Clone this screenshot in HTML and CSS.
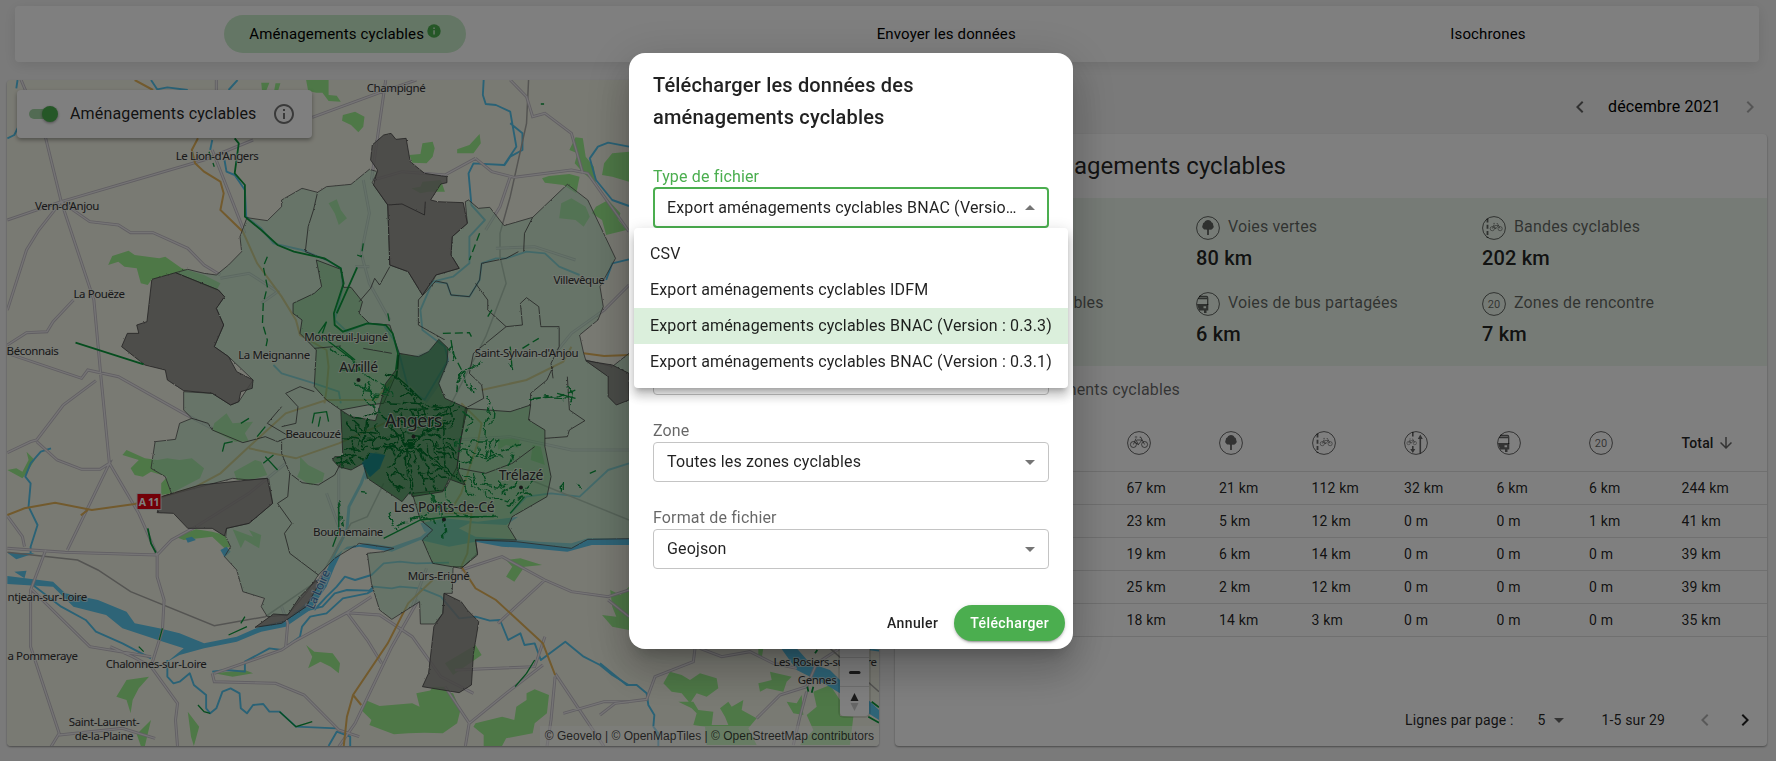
FILE: index.html
```html
<!DOCTYPE html>
<html lang="fr">
<head>
<meta charset="utf-8">
<title>Aménagements cyclables</title>
<link rel="stylesheet" href="styles.css">
</head>
<body>
<svg class="defs" width="0" height="0">
  <defs>
    <filter id="wiggle" x="-5%" y="-5%" width="110%" height="110%"><feTurbulence type="fractalNoise" baseFrequency=".09" numOctaves="2" seed="4"/><feDisplacementMap in="SourceGraphic" scale="11" xChannelSelector="R" yChannelSelector="G"/></filter>
    <filter id="jag" x="-2%" y="-2%" width="104%" height="104%"><feTurbulence type="fractalNoise" baseFrequency=".16" numOctaves="2" seed="9"/><feDisplacementMap in="SourceGraphic" scale="5" xChannelSelector="R" yChannelSelector="G"/></filter>
    <g id="bike" fill="none" stroke="currentColor" stroke-width=".9">
      <circle cx="6.4" cy="13.5" r="3"/><circle cx="17.6" cy="13.5" r="3"/>
      <path d="M6.4 13.5 9 7.5M9.8 9h5.2l-3.6 4.6L9 9M14 6.2h-1.4M13.8 6.2l3.8 7.3M7.8 6h2.4M11.4 13.6l-3-1.8"/>
    </g>
    <symbol id="i-track" viewBox="0 0 24 24"><circle class="ring" cx="12" cy="12" r="11.4"/><use href="#bike"/></symbol>
    <symbol id="i-tree" viewBox="0 0 24 24"><circle class="ring" cx="12" cy="12" r="11.4"/><path fill="currentColor" d="M12 4c2 0 3 1 3.4 2.2 1.5.5 2 1.6 1.7 2.8 1 1.100.8 2.800-.4 3.600-.7 1.200-2.200 1.400-3.400.9l-.4.800V19h-1.800v-4.700l-.6-.9c-1.500.5-2.700.1-3.300-1-1.200-.9-1.300-2.300-.4-3.400-.2-1.300.4-2.300 1.700-2.800C9 5 10.200 4 12 4z"/></symbol>
    <symbol id="i-lane" viewBox="0 0 24 24"><circle class="ring" cx="12" cy="12" r="11.4"/><path d="M5.500 2.500V22" stroke="currentColor" stroke-width="1.800" stroke-dasharray="4 2.200"/><g transform="translate(5.800 3.200) scale(.7)"><use href="#bike"/></g></symbol>
    <symbol id="i-double" viewBox="0 0 24 24"><circle class="ring" cx="12" cy="12" r="11.4"/><g transform="translate(1 4.500) scale(.56)"><use href="#bike"/></g><path fill="currentColor" d="M8 1h1.600v4.500H8zM8 15h1.600v3h1.700L8.800 22l-2.600-4H8zM15.500 8h-1.700L16.300 3.500 18.800 8h-1.700v14.500h-1.600z"/></symbol>
    <symbol id="i-bus" viewBox="0 0 24 24"><circle class="ring" cx="12" cy="12" r="11.4"/><path fill="none" stroke="currentColor" stroke-width="1.300" d="M2 6.500h9M3 4.500h7.500q1.200 0 1.200 1.600V13"/><path fill="currentColor" fill-rule="evenodd" d="M1 12h11.300v6.600H10.500V21H8v-2.400H3zM7.500 14.300v2h2.600v-2z"/></symbol>
    <symbol id="i-zone" viewBox="0 0 24 24"><circle class="ring" cx="12" cy="12" r="11.4"/><text x="12" y="16.200" text-anchor="middle" class="t20">20</text></symbol>
    <symbol id="i-left" viewBox="0 0 24 24"><path fill="currentColor" d="M15.410 7.410 14 6l-6 6 6 6 1.410-1.410L10.830 12z"/></symbol>
    <symbol id="i-right" viewBox="0 0 24 24"><path fill="currentColor" d="M10 6 8.590 7.410 13.170 12l-4.580 4.590L10 18l6-6z"/></symbol>
    <symbol id="i-drop" viewBox="0 0 24 24"><path fill="currentColor" d="m7 10 5 5 5-5z"/></symbol>

    <g id="roads">
      <path vector-effect="non-scaling-stroke" d="M18 660 150 605 500 480M150 605 112 415 50 235M150 605 95 690 65 750 18 930M150 605 220 665 290 675 320 698 375 698 460 745 500 795 540 825M150 605 230 900 248 1140 268 1390 340 1540 385 1665 385 1730 402 1800 398 1890 370 2000 435 2110 430 2160 435 2240M18 1035 65 998 115 995 130 965 180 900M18 1060 200 1135 215 1110 290 1130 450 1240 520 1285M235 1142 155 1215 90 1320 75 1325 18 1358M90 1325 140 1380 200 1408 245 1408 268 1390 165 1650M18 1645 160 1657 385 1665 420 1620 480 1580 610 1480 700 1390M500 480 620 420M765 352 930 278 1020 240M945 240 910 540M530 240V270M520 450 600 700M915 540 985 515 1090 525 1165 475M1165 475 1205 515 1260 532 1400 510 1440 520 1541 695M1250 240 1290 290 1305 350 1335 340 1400 400 1428 520M1250 530 1225 620 1190 690M1541 855 1480 930 1400 1000 1360 1060M540 835 610 820 680 875 640 910M890 540 905 640 885 760 905 850 955 960M870 800 905 800M1215 745 1310 740 1410 780M18 1548 55 1610 60 1640M112 1650 75 1770 75 1940 145 2200 125 2240M75 1765 220 1940 370 1970M370 2000 325 1970 270 1940M520 2020 525 2045 675 2050 745 2085 830 2190 880 2210M525 2020 690 1950 720 1925 850 1838 910 1790M850 1838 930 1845 1010 1910 1080 2030 1160 2080M850 1838 900 1920 935 1990M1130 1710 1230 1670 1335 1740 1400 1775 1490 1790 1541 1770M1490 1800 1541 1850M1150 2170 1240 2080 1330 1995M1380 2140 1480 2105 1541 2105M1115 2010 1310 2000 1335 1910M1150 2165 1140 2240M145 2205 300 2185 380 2215M1360 2030 1350 2160 1340 2240M1360 2020 1480 2240M1335 1740 1220 1870M1115 1320 1250 1310 1400 1350 1541 1350M1090 2060 1150 2170M700 1940 705 1870 690 1820M800 1480 830 1580 830 1400"/>
      <path vector-effect="non-scaling-stroke" d="M1025 1800 960 1940 870 2170 830 2240M1045 1705 1010 1820"/>
    </g>
    <path id="aroads" vector-effect="non-scaling-stroke" d="M330 240 375 270M485 415 470 450 478 490 500 515 540 545 548 580 540 630 595 695 630 790 690 890 725 960 735 1005 800 1050 805 1100 800 1170 795 1210M18 1545 60 1525 135 1508 225 1530 330 1512 400 1490 480 1460 540 1420 610 1340 700 1240 800 1200 920 1200 960 1140M610 1345 725 1375 830 1330 960 1260M1100 1540 1130 1480 1170 1330 1180 1270 1130 1210M1180 1170 1290 1140 1380 1085 1400 1040M1430 1060 1480 1068 1541 1065M1090 1540 1155 1540 1145 1660 1130 1700 1165 1765 1215 1800 1330 1930 1360 2025M1060 1740 1000 1810 950 1930 865 2085 850 2150 842 2240M198 1546 215 1530M865 2085 885 2115"/>
  </defs>
</svg>

<div class="page">
  <nav class="tabs">
    <span class="tab tab--on">Aménagements cyclables<svg class="tab__info" viewBox="0 0 24 24"><circle cx="12" cy="12" r="11.500" fill="#4bae4f"/><path d="M10.700 10.500h2.800v7.500h-2.800zM10.700 6h2.800v2.700h-2.800z" fill="#c9ecca"/></svg></span>
    <span class="tab">Envoyer les données</span>
    <span class="tab">Isochrones</span>
  </nav>

  <div class="columns">
    <section class="map">
      <svg class="map__canvas" viewBox="7 80 872 666" width="872" height="666">
        <rect x="7" y="80" width="872" height="666" fill="#f3f4e6"/>
        <g transform="scale(.408163 .333333)">
          <!-- woods -->
          <g class="wood">
            <path d="M750 240h55v45l20 2 10 18-30-2-15-25-15 0-20-5zM640 248h20l-8 25h-10zM675 250h12l-5 20h-10zM840 345 870 335 893 350 890 380 878 397 860 375 838 362zM1003 465 1030 462 1035 430 1060 425 1065 445 1060 470 1045 490 1010 488zM1120 448 1150 435 1175 402 1178 430 1160 460 1120 460zM1008 565 1030 560 1035 545 1080 540 1090 575 1050 575 1030 580zM1328 535 1345 528 1395 522 1420 530 1412 580 1380 555 1335 548zM1410 412 1428 415 1435 470 1455 500 1460 550 1430 520 1408 490 1415 460 1395 450zM1480 490 1500 460 1541 455 1541 545 1500 530 1475 525zM1375 610 1400 595 1435 620 1445 650 1430 680 1410 660 1370 655zM1460 620 1490 600 1520 640 1515 660 1535 690 1485 705 1475 660 1450 640zM805 610 825 598 835 630 850 655 830 675 820 640zM265 795 275 768 315 752 330 765 390 775 405 770 445 805 500 825 540 850 530 872 430 820 372 838 362 855 345 850 335 805 305 800 290 785z"/>
            <path transform="translate(0 1140)" d="M300 225 310 210 355 235 385 240 410 235 440 240 470 235 500 265 490 295 420 340 395 345 395 310 410 290 370 275 350 290 330 285 320 265 340 240zM18 270 40 265 55 275 70 240 65 215 85 240 65 280 55 295zM525 130 555 100 570 130 620 125 600 160 610 185 575 185 520 150zM573 275 625 240 640 245 655 285 620 298 580 300zM735 230 755 255 795 280 790 305 760 315 728 290 735 270zM1220 180 1275 172 1270 205 1240 195 1220 210zM1305 195 1325 200 1335 255 1300 240zM430 470 480 448 520 455 550 465 565 500 550 505 520 470 450 480zM570 448 620 470 610 450 640 465 635 505 600 480 590 505zM750 795 770 815 815 820 833 850 830 880 810 860 785 845 755 865 765 830zM525 880 600 870 620 880 570 890zM1020 940 1060 930 1110 940 1128 990 1120 1030 1085 1060 1040 1058 1000 1060 965 1063 905 1035 910 1020 885 990 895 960 930 978 1010 970 1028 980zM1165 1030 1230 1010 1260 1020 1265 980 1290 960 1290 940 1310 928 1345 945 1340 1000 1310 1030 1305 1060 1240 1075 1230 1098 1185 1098 1185 1065 1160 1040zM1240 540 1275 535 1328 555 1285 560 1260 605 1240 590 1255 560zM1495 630 1520 645 1541 620 1541 750 1500 740 1475 705 1510 710 1500 680zM1090 850 1165 795 1180 825 1110 885zM310 900 365 890 340 925 325 960 320 1000 310 960 285 950zM335 1063 370 1020 355 1098 345 1098zM460 995 488 1040 475 1098 468 1070zM1060 920 1090 920 1100 940 1050 940z"/>
          </g>
          <!-- rivers -->
          <g class="water">
            <path d="M43 240 40 265M370 240 385 268 410 262 460 270M560 270 582 240M18 415 35 405 45 380M520 420 515 450M550 480 555 515 575 525 600 570 603 650 640 685 670 730 740 750 800 780 835 805 840 860 820 960 850 995 900 970 940 975 965 1020 978 1060 1000 1165 1040 1200 1098 1080 1090 1040 1035 990 1030 930 1060 845 1110 830 1150 790 1150 710 1188 660 1155 615 1148 520 1160 490 1235 495 1265 440 1250 335 1215 315 1190 312 1183 285 1185 240M1250 370 1280 400 1280 450 1250 470 1235 497M1060 845 1095 850 1105 885 1150 890 1175 840 1180 790 1215 775 1240 775 1290 755 1335 760 1370 800 1420 825M1485 840 1500 790 1541 778M1541 440 1490 428 1465 440 1445 475 1460 540 1500 600 1541 618M670 1095 690 1120 770 1150 830 1175 835 1210"/>
            <g transform="translate(0 1140)">
              <path class="w3" d="M900 260 885 310 855 380 850 450 820 520 800 590 770 660"/>
              <path d="M125 205 100 215 75 250 62 290 75 310 70 380 92 435 75 500 75 520M75 610 150 680 210 720 235 755 300 790 370 835M410 840 410 890 425 910 440 905 465 880 475 915 505 945 505 985 515 1000 530 985 545 935 565 925 587 940 590 985 605 1000 620 975 645 972 660 995 685 995 725 1040 825 1045M520 875 555 870 600 875 600 845 660 805 690 810 735 770 740 740 760 710 800 700 840 655 900 640 915 630M720 700 790 680 820 640 850 630 905 632 915 620 960 625 980 620 1030 625 1080 650 1125 715 1165 710 1200 722 1225 720 1245 780 1275 760 1285 795 1310 790 1325 840 1385 785 1430 830 1470 855 1500 885 1540 915M770 690 800 650 825 620 845 590 870 600 910 585 940 550 980 545 1020 550 1100 548M805 1098 825 1055 858 1070 858 1098M1250 400 1290 350 1350 340 1420 350 1490 270 1541 250"/>
              <path class="wf" d="M18 588 130 605 160 640 240 660 310 695 330 730 390 745 440 760 500 790 580 770 640 738 700 720 760 660 790 590 820 530 850 500 900 490 960 500 1030 470 1060 440 1100 430 1165 470 1230 475 1320 485 1400 490 1440 475 1541 475 1541 495 1450 495 1390 515 1300 505 1230 500 1165 485 1100 500 1030 480 960 515 880 500 840 510 820 560 800 620 760 690 700 740 640 755 580 785 500 805 440 825 410 845 450 805 400 785 300 745 260 705 180 680 130 620 18 612zM1030 430 1090 415 1170 425 1270 410 1240 435 1150 430 1100 460 1040 455zM890 250 920 215 945 225 925 270 895 300zM455 475 470 470 480 480 460 488zM540 510 555 500 565 515 550 532zM18 518 85 520 40 538zM35 575 65 572 60 595z"/>
            </g>
          </g>
          <path class="rail" d="M1295 240 1290 370 1250 590 1225 700 1225 770 1240 850 1190 1010 1110 1200 1090 1240M18 1657 190 1680 240 1710 320 1775 525 1877 650 1850 780 1740 860 1570 900 1550 940 1450M1300 1440 1541 1560"/>
          <use href="#roads" class="road-case"/><use href="#roads" class="road-in"/>
          <use href="#aroads" class="aroad"/>

          <!-- municipalities -->
          <g filter="url(#jag)">
          <path class="z1" d="M605 653 655 662 690 620 690 600 740 565 778 577 800 560 860 553 905 508 925 515 912 548 950 615 955 795 1000 815 1035 885 1062 840 1068 825 1125 805 1105 765 1108 710 1145 670 1140 605 1148 600 1172 625 1200 622 1235 677 1305 652 1390 553 1440 600 1475 690 1508 775 1470 860 1478 920 1465 960 1420 1005 1430 1060 1435 1080 1500 1100 1541 1060 1600 1060V1615L1440 1618 1400 1645 1265 1625 1165 1620 1170 1660 1135 1700 1110 1700 1108 1780 1088 1780 1085 1840 1065 1872 1030 1872 1028 1805 960 1858 930 1830 910 1750 900 1660 940 1655 965 1645 880 1630 820 1675 780 1725 750 1780 705 1845 655 1850 640 1820 648 1795 595 1775 580 1710 550 1670 565 1640 553 1610 555 1585 610 1570 668 1510 658 1435 610 1440 570 1435 400 1490 420 1480 405 1430 370 1405 380 1325 430 1318 440 1270 470 1255 450 1230 450 1175 520 1180 565 1215 585 1205 620 1140 560 1070 525 1040 548 975 530 925 550 890 535 870 430 818 460 808 500 820 530 825 560 795 592 755 588 710z"/>
          <path class="z2" d="M775 780 835 808 842 862 860 862 888 905 880 940 905 970 955 975 978 1060 975 1110 940 1210 900 1215 835 1230 800 1200 770 1160 775 1050 735 1000 740 960 718 940 718 910 770 880 788 860zM1140 1225 1250 1235 1300 1215 1295 1260 1335 1290 1335 1340 1350 1430 1340 1490 1255 1550 1245 1580 1265 1620 1165 1620 1170 1665 1130 1705 1060 1690 1035 1620 1060 1590 1030 1560 1010 1480 1090 1470 1120 1400z"/>
          <path class="z3" d="M978 1060 1025 1070 1050 1055 1075 1018 1098 1045 1095 1090 1075 1150 1090 1195 1145 1225 1125 1340 1120 1400 1125 1420 1140 1455 1100 1437 1085 1475 1010 1490 1005 1475 985 1505 900 1435 890 1390 860 1410 830 1400 815 1380 820 1370 840 1370 835 1230 860 1250 920 1262 930 1220 945 1150 970 1110z"/>
          <path class="zg" d="M912 435 940 405 958 400 970 418 995 415 1005 485 1040 520 1095 530 1095 548 1080 552 1055 600 1072 605 1135 608 1145 670 1108 710 1105 765 1125 805 1068 825 1035 885 1000 815 955 795 950 615 915 555 925 510 908 480zM372 838 430 818 535 870 550 890 530 925 548 975 525 1040 560 1070 580 1115 620 1140 618 1165 590 1175 585 1205 565 1215 520 1180 450 1172 410 1140 405 1110 355 1095 298 1040 312 1000 340 1000 335 975 360 965zM385 1538 395 1490 490 1455 610 1440 655 1435 668 1510 610 1570 555 1585 550 1608 520 1585 460 1585 425 1540zM625 1882 670 1842 705 1845 735 1790 775 1740 780 1755 750 1820 690 1870zM1088 1780 1130 1805 1145 1830 1173 1865 1160 1960 1155 2055 1125 2078 1035 2060 1050 2020 1063 1880 1085 1840zM1435 1082 1500 1095 1541 1120V1200L1510 1215 1490 1190 1490 1130z"/>
          <path class="border" d="M778 577 768 630 755 680 748 755 800 780M955 800 930 855 918 835 908 865 880 905M950 615 985 612 1040 645 1042 605M1068 843 1025 900 1025 975 1090 1020M1165 850 1195 900 1195 930 1240 980 1280 975 1275 910 1290 893 1320 920 1325 980 1370 980 1370 1040 1350 1090 1355 1135M1283 755 1285 700 1305 652M1068 843 1095 850 1105 885 1150 890 1175 840 1180 790 1240 775 1270 755M690 1280 725 1270 730 1220 700 1180 735 1160 770 1175M470 1255 510 1270 520 1290 595 1328 650 1310 680 1325 710 1310 655 1270 690 1220M690 1325 690 1360 710 1420 705 1490 680 1510 715 1570 697 1600 710 1660 780 1725M710 1420 740 1448 780 1455 820 1425 835 1390M1125 1405 1190 1420 1255 1390 1310 1340M1140 1225 1185 1195 1180 1155 1150 1120 1160 1060 1240 980M1300 1215 1300 1180 1340 1140 1355 1100M1390 1130 1395 1230 1433 1262 1395 1290 1390 1310 1335 1315M835 1038 770 1045M890 1045 960 1060"/>
          </g>

          <!-- cycle routes -->
          <g class="route">
            <path class="r2" d="M575 415 585 430 575 520 600 555 600 650 640 690 680 735 720 755 795 775 835 805 842 850 818 940 820 975 840 995 900 970 945 975 962 1000 975 1060 970 1110"/>
            <path class="r2" d="M185 1028 352 1093M875 802 825 940M362 1585 370 1630 382 1658"/>
            <path class="dash" d="M512 455 525 500M655 770 645 800 655 860 645 910 643 970 655 1020 650 1050M890 730 885 770 875 765M1175 700 1150 780M950 940 955 970M1085 1000 1150 998 1155 1010M1105 1020 1110 1060 1135 1120M1195 950 1210 920M1250 1040 1255 1110M1280 1045 1320 1015M1305 1195 1370 1190 1410 1170"/>
            <path d="M780 1000 800 965 790 1000M790 1010 865 1080M830 1040 870 1080M765 1270 770 1240 800 1235 805 1265M780 1280 785 1250M545 1355 550 1330 570 1325M590 1270 610 1255M630 1310 650 1280M650 1370 680 1410M645 1390 670 1365M1365 1180 1410 1195M830 1510 830 1590 815 1640M940 1615 1030 1560 1100 1550 1210 1550M1310 1980 1290 2020 1262 2060M560 1905 605 1880M590 1870 600 1850M485 2115 500 2135 515 2140M685 2135 725 2180 765 2165M390 1920 398 1885M340 1940 352 1955M1250 1540 1285 1490M1380 1450V1470M1445 1420 1460 1412M1325 312 1333 312"/>
          </g>
        </g>

        <!-- Angers street network -->
        <g transform="translate(330 340) scale(.333333)">
          <path class="lake" d="M95 370 120 338 165 345 150 385 120 412z"/>
          <path class="lake lake--pale" d="M205 45 245 50 290 35 330 0 350 30 355 70 325 140 290 190 255 150 210 110z"/>
          <path class="street" d="M205 45 200 110 240 145 275 180"/>
        </g>
        <g filter="url(#wiggle)"><g transform="translate(330 340) scale(.333333)">
          <path class="street" d="M170 100 215 130 265 175M170 185 260 190 330 200 375 185M210 170 240 160 280 205M190 210 340 205M60 225 100 230 140 215M50 250 65 270 140 280M70 240 125 290 130 330M40 290 90 300 160 295 240 280 330 290M45 330 110 325 160 320 240 340M40 355 80 345 120 350M15 365 60 375M30 340 40 380M75 250 90 290 85 320M110 240 100 320M140 250 150 300M150 230 190 260M170 250 230 310 300 350M165 310 200 330 260 290 360 240M160 320 210 350 270 310M180 380 230 320 330 240 395 200M175 385 215 330M190 270 200 310M200 280 260 330 350 390M220 270 230 330 240 460M240 340 250 460M250 330 290 450M265 325 320 460M280 300 370 330M290 280 375 300M300 250 345 220 350 190M310 270 370 265M330 220 325 280M345 240 340 300M355 190 370 260M320 300 325 370M340 290 345 380M290 320 300 360 340 350M300 370 355 400M270 400 340 390M280 420 350 410M170 405 205 450M190 390 235 420M185 410 230 400M185 430 220 450M240 210 250 250M260 210 275 260M285 210 290 270M210 220 220 255M200 240 300 240M230 260 350 260M165 340 200 300M350 310 380 345M330 330 365 360M345 380 400 430M360 340 390 370 385 410M180 225 190 255 185 275M60 300 75 340 60 370M20 350 45 345 60 360 80 375M250 230 300 225"/>
          <path class="street2" d="M0 20 60 60 140 130 190 160M40 90 90 90M100 130 105 190 150 220M110 120 135 200M80 130 150 170M95 150 170 160M120 180 180 140M470 165 480 190 470 230 460 290M490 200 485 260M400 220 430 240 410 275M430 300 500 300 495 330M445 320 440 350 500 350M465 295 470 360 520 350M480 300 485 360M380 330 440 340 520 345M395 370 450 350M520 330 575 310M530 380 545 340M400 400 440 430 520 440M410 420 470 470 540 480M430 400 450 450 500 460M460 390 470 430M400 440 430 470M500 420 520 460 560 430M560 470 630 400M580 450 600 470M530 500 580 470M240 540 330 500 400 530 500 525M270 530 320 545M200 555 290 530M335 510 345 590M350 440 360 500M300 460 330 520M180 520 195 570M400 95 440 80 450 60M390 95 380 150M400 100 410 140 440 150M420 130 430 170M370 60 365 20 355 30M380 130 400 90M600 180 650 170 730 175M690 155 700 165M710 140 735 160 725 195M30 480 40 560M90 455 110 457M700 425V455M740 435 755 440M540 70 545 90M370 310 420 320 430 300M390 290 395 330M410 330 420 360"/>
        </g></g>

        <!-- south-east corner -->
        <g transform="translate(600 380) scale(.333333)">
          <path class="wood" d="M190 910 210 875 245 885 270 900 300 880 350 895 355 925 320 950 290 940 270 970 245 940 215 935zM235 965 280 965 295 990 340 995 335 1035 385 1035 375 1010 360 985 385 965 395 980 430 960 425 990 470 1015 445 1045 470 1095 320 1095 315 1040 280 1035 290 1000 275 985zM475 910 515 900 510 875 575 890 560 905 550 935 500 925 480 935zM560 965 590 970 605 945 610 1005 580 1000zM640 935 690 915 720 960 720 1008 760 1010 750 1095 600 1095 640 1050 620 1005 650 980zM475 805 490 805 485 835 475 830z"/>
          <path class="wf" d="M540 800 590 805 630 850 690 870 720 900V940L680 915 630 890 590 870zM805 960 837 990V1020L805 1000z"/>
          <path class="water" d="M0 850 80 915 110 915 140 940 145 975 163 1005 160 1040 175 1060 175 1098M810 808 837 812"/>
          <path class="road-case" d="M0 1005 45 970 140 958 165 890 280 845 285 805M300 805 365 830 450 815 520 850 590 865M470 1015 540 945 620 920 650 850 720 805M620 935 600 1010 580 1095"/>
          <path class="road-in" d="M0 1005 45 970 140 958 165 890 280 845 285 805M300 805 365 830 450 815 520 850 590 865M470 1015 540 945 620 920 650 850 720 805M620 935 600 1010 580 1095"/>
          <path class="rail" d="M690 805 837 935"/>
          <path class="route r2" d="M645 820 652 810M622 920 625 935M640 920 635 938M815 965 837 982M805 1010 837 1028"/>
        </g>

        <g class="labels">
          <text x="396" y="92">Champigné</text><text x="217" y="160">Le Lion-d'Angers</text><text x="67" y="209.500">Vern-d'Anjou</text>
          <text x="99" y="298">La Pouëze</text><text x="32.500" y="355">Béconnais</text><text x="346" y="341">Montreuil-Juigné</text>
          <text x="274" y="359">La Meignanne</text><text x="579" y="284">Villevêque</text><text x="526.500" y="357">Saint-Sylvain-d'Anjou</text>
          <text x="313" y="438">Beaucouzé</text><text x="348" y="536">Bouchemaine</text><text x="438.500" y="580">Mûrs-Erigné</text>
          <text class="ls" x="7.500" y="601">ntjean-sur-Loire</text><text class="ls" x="7.500" y="660">a Pommeraye</text><text x="156" y="668">Chalonnes-sur-Loire</text>
          <text x="104" y="726">Saint-Laurent-</text><text x="104" y="739.500">de-la-Plaine</text>
          <text x="825" y="665.500">Les Rosiers-sur-Loire</text><text x="817" y="684">Gennes</text>
          <text class="l2" x="358.500" y="372">Avrillé</text><text class="l2" x="521" y="480">Trélazé</text><text class="l2" x="444" y="512">Les Ponts-de-Cé</text>
          <text class="l3" x="413.500" y="427">Angers</text>
          <text class="lw" transform="translate(319 590) rotate(-66)" x="0" y="3">La Loire</text>
          <g fill="#333"><circle cx="358.500" cy="380" r="2"/><circle cx="413.500" cy="436.500" r="2"/><circle cx="521" cy="487.500" r="2"/><circle cx="444" cy="519.500" r="2"/></g>
          <rect x="137" y="493.500" width="24" height="16" fill="#e60010" stroke="#ddd" stroke-width="1"/><text class="shield" x="149" y="505.500">A 11</text>
        </g>
      </svg>
      <div class="layer">
        <span class="switch"><span class="switch__thumb"></span></span>
        <span class="layer__name">Aménagements cyclables</span>
        <svg class="layer__info" viewBox="0 0 24 24"><path fill="#757575" d="M11 7h2v2h-2zm0 4h2v6h-2zm1-9C6.480 2 2 6.480 2 12s4.480 10 10 10 10-4.480 10-10S17.520 2 12 2zm0 18c-4.410 0-8-3.590-8-8s3.590-8 8-8 8 3.590 8 8-3.590 8-8 8z"/></svg>
      </div>
      <div class="ctrl">
        <span class="ctrl__b"><svg viewBox="0 0 29 29"><path fill="#333" d="M9 13h11v3H9zM13 9h3v11h-3z"/></svg></span>
        <span class="ctrl__b"><svg viewBox="0 0 29 29"><rect fill="#333" x="9" y="13" width="11.500" height="3" rx="1.500"/></svg></span>
        <span class="ctrl__b"><svg viewBox="0 0 29 29"><path fill="#333" d="m10.500 14 4-8 4 8z"/><path fill="#ccc" d="m10.500 16 4 8 4-8z"/></svg></span>
      </div>
      <div class="attrib">© Geovelo | © OpenMapTiles | © OpenStreetMap contributors</div>
    </section>

    <section class="side">
      <div class="month"><svg class="ic24 c54"><use href="#i-left"/></svg><span class="month__name">décembre 2021</span><svg class="ic24 c26"><use href="#i-right"/></svg></div>
      <div class="card">
        <h2 class="card__title">Chiffres clés des aménagements cyclables</h2>
        <div class="stats">
          <div class="stat"><div class="stat__l"><svg class="ic24"><use href="#i-track"/></svg><span>Pistes cyclables</span></div><div class="stat__v">95 km</div></div>
          <div class="stat"><div class="stat__l"><svg class="ic24"><use href="#i-tree"/></svg><span>Voies vertes</span></div><div class="stat__v">80 km</div></div>
          <div class="stat"><div class="stat__l"><svg class="ic24"><use href="#i-lane"/></svg><span>Bandes cyclables</span></div><div class="stat__v">202 km</div></div>
          <div class="stat"><div class="stat__l"><svg class="ic24"><use href="#i-double"/></svg><span>Double-sens cyclables</span></div><div class="stat__v">54 km</div></div>
          <div class="stat"><div class="stat__l"><svg class="ic24"><use href="#i-bus"/></svg><span>Voies de bus partagées</span></div><div class="stat__v">6 km</div></div>
          <div class="stat"><div class="stat__l"><svg class="ic24"><use href="#i-zone"/></svg><span>Zones de rencontre</span></div><div class="stat__v">7 km</div></div>
        </div>
        <div class="sub">Détail par ville des aménagements cyclables</div>
        <div class="row row--head"><span>Ville</span><span><svg class="ic24"><use href="#i-track"/></svg></span><span><svg class="ic24"><use href="#i-tree"/></svg></span><span><svg class="ic24"><use href="#i-lane"/></svg></span><span><svg class="ic24"><use href="#i-double"/></svg></span><span><svg class="ic24"><use href="#i-bus"/></svg></span><span><svg class="ic24"><use href="#i-zone"/></svg></span><span class="total">Total<svg class="sort" viewBox="0 0 24 24"><path fill="currentColor" d="m20 12-1.410-1.410L13 16.170V4h-2v12.170l-5.580-5.590L4 12l8 8 8-8z"/></svg></span></div>
        <div class="row"><span>Angers</span><span>67 km</span><span>21 km</span><span>112 km</span><span>32 km</span><span>6 km</span><span>6 km</span><span>244 km</span></div>
        <div class="row"><span>Avrillé</span><span>23 km</span><span>5 km</span><span>12 km</span><span>0 m</span><span>0 m</span><span>1 km</span><span>41 km</span></div>
        <div class="row"><span>Trélazé</span><span>19 km</span><span>6 km</span><span>14 km</span><span>0 m</span><span>0 m</span><span>0 m</span><span>39 km</span></div>
        <div class="row"><span>Beaucouzé</span><span>25 km</span><span>2 km</span><span>12 km</span><span>0 m</span><span>0 m</span><span>0 m</span><span>39 km</span></div>
        <div class="row"><span>Bouchemaine</span><span>18 km</span><span>14 km</span><span>3 km</span><span>0 m</span><span>0 m</span><span>0 m</span><span>35 km</span></div>
        <div class="pager"><span class="pager__l">Lignes par page :</span><span class="pager__n">5</span><svg class="ic24 c54 pager__d"><use href="#i-drop"/></svg><span class="pager__r">1-5 sur 29</span><svg class="ic24 c26 pager__p"><use href="#i-left"/></svg><svg class="ic24"><use href="#i-right"/></svg></div>
      </div>
    </section>
  </div>
</div>

<div class="backdrop">
  <div class="dialog">
    <h1 class="dialog__title">Télécharger les données des aménagements cyclables</h1>
    <div class="field field--focus">
      <div class="field__l">Type de fichier</div>
      <div class="select"><span class="select__v">Export aménagements cyclables BNAC (Version : 0.3.3)</span><svg class="ic24 flip"><use href="#i-drop"/></svg></div>
      <div class="menu">
        <div class="menu__i">CSV</div>
        <div class="menu__i">Export aménagements cyclables IDFM</div>
        <div class="menu__i menu__i--on">Export aménagements cyclables BNAC (Version : 0.3.3)</div>
        <div class="menu__i">Export aménagements cyclables BNAC (Version : 0.3.1)</div>
      </div>
    </div>
    <div class="field"><div class="field__l"></div><div class="select"></div></div>
    <div class="field"><div class="field__l">Zone</div><div class="select"><span class="select__v">Toutes les zones cyclables</span><svg class="ic24"><use href="#i-drop"/></svg></div></div>
    <div class="field"><div class="field__l">Format de fichier</div><div class="select"><span class="select__v">Geojson</span><svg class="ic24"><use href="#i-drop"/></svg></div></div>
    <div class="actions"><span class="btn">Annuler</span><span class="btn btn--go">Télécharger</span></div>
  </div>
</div>
</body>
</html>
```

FILE: styles.css
```css
* { box-sizing: border-box; }
body {
  margin: 0;
  width: 1776px;
  height: 761px;
  overflow: hidden;
  background: #f5f5f5;
  font-family: Roboto, "Liberation Sans", sans-serif;
  font-size: 16px;
  color: rgba(0, 0, 0, .87);
}
.defs { position: absolute; }
svg { display: block; flex: none; }
.ic24 { width: 24px; height: 24px; }
.c54 { color: rgba(0, 0, 0, .6); }
.c26 { color: rgba(0, 0, 0, .3); }
.flip { transform: rotate(180deg); }

.page { padding: 6px 9px 0 7px; }
.tabs {
  display: flex;
  justify-content: space-around;
  align-items: center;
  height: 56px;
  margin: 0 8px;
  padding: 0 16px;
  background: #fff;
  border-radius: 4px;
  box-shadow: 0 3px 14px rgba(0, 0, 0, .1);
  color: #000;
}
.tab { display: flex; height: 38px; line-height: 39px; padding: 0 24px; font-size: 15px; letter-spacing: .14px; border-radius: 19px; }
.tab--on { padding: 0 25px; background: #c9ecca; }
.tab__info { width: 14px; height: 14px; margin: 9px 0 0 3px; }

.columns { display: flex; gap: 16px; margin-top: 18px; }

.map {
  position: relative;
  width: 872px;
  height: 666px;
  overflow: hidden;
  border-radius: 4px;
  box-shadow: 0 1px 2px rgba(0, 0, 0, .4);
}
.wood { fill: #9cf08e; stroke: none; }
.map__canvas path { vector-effect: non-scaling-stroke; }
.water { fill: none; stroke: #54c4ec; stroke-width: 1.9; stroke-linejoin: round; }
.water .w3 { stroke-width: 3; }
.water .wf, .wf { fill: #5cc8ee; stroke: none; }
.rail { fill: none; stroke: #a8a8a4; stroke-width: 1.5; }
.road-case { fill: none; stroke: #c2bec6; stroke-width: 3; }
.road-in { fill: none; stroke: #ebe8ea; stroke-width: 1.3; }
.aroad { fill: none; stroke: #e4b45a; stroke-width: 2; }
.z1 { fill: rgba(176, 224, 190, .55); stroke: #555; stroke-width: .8; }
.z2 { fill: rgba(80, 190, 95, .32); stroke: #444; stroke-width: .8; }
.z3 { fill: rgba(30, 120, 50, .58); stroke: #444; stroke-width: .8; }
.zg { fill: rgba(138, 136, 132, .84); stroke: #444; stroke-width: .8; }
.border { fill: none; stroke: #444; stroke-width: .8; }
.route { fill: none; stroke: #0a9a3c; stroke-width: 1.3; }
.route .r2, .r2 { stroke-width: 1.8; }
.route .dash { stroke-dasharray: 8 4; }
.lake { fill: rgba(0, 130, 150, .65); }
.lake--pale { fill: rgba(20, 130, 130, .15); }
.street { fill: none; stroke: #04732a; stroke-width: 1.5; stroke-dasharray: 14 2 6 1; }
.street2 { fill: none; stroke: #0c9440; stroke-width: 1.4; stroke-dasharray: 12 2 5 2; }
.labels text {
  font: 11.5px "Noto Sans", sans-serif;
  letter-spacing: -.42px;
  text-anchor: middle;
  fill: #333;
  stroke: rgba(240, 244, 236, .6);
  stroke-width: 2px;
  paint-order: stroke;
}
.labels .ls { text-anchor: start; }
.labels .l2 { font-size: 14px; letter-spacing: -.3px; }
.labels .l3 { font-size: 18px; letter-spacing: -.5px; }
.labels .lw { font-size: 12px; fill: #3c78b4; }
.labels .shield { font-size: 10.5px; font-weight: 700; fill: #fff; stroke: none; }

.layer {
  position: absolute;
  left: 10px;
  top: 10px;
  display: flex;
  align-items: center;
  width: 295px;
  height: 48px;
  padding-left: 12px;
  background: #fff;
  border-radius: 4px;
  box-shadow: 0 2px 4px rgba(0, 0, 0, .35);
}
.switch { display: flex; align-items: center; justify-content: flex-end; width: 26px; height: 10px; border-radius: 5px; background: #a5d7a7; }
.switch__thumb { width: 16px; height: 16px; margin-right: -3px; border-radius: 50%; background: #4bae4f; box-shadow: 0 1px 3px rgba(0, 0, 0, .4); }
.layer__name { margin: 0 0 2px 15px; letter-spacing: .15px; width: 202px; white-space: nowrap; }
.layer__info { width: 24px; height: 24px; }
.ctrl { position: absolute; right: 10px; bottom: 30px; width: 29px; background: #fff; border-radius: 4px; box-shadow: 0 0 0 2px rgba(0, 0, 0, .1); }
.ctrl__b { display: block; height: 29px; border-bottom: 1px solid #ddd; }
.ctrl__b:last-child { border: 0; }
.attrib { position: absolute; right: 0; bottom: 0; height: 20px; padding: 0 5px; background: rgba(255, 255, 255, .5); font: 12px/20px "Liberation Sans", Arial, sans-serif; color: rgba(0, 0, 0, .75); }

.side { width: 872px; }
.month { display: flex; justify-content: flex-end; align-items: center; height: 54px; padding: 0 5px 1px 0; color: #000; }
.month__name { margin: 0 17px 0 16px; letter-spacing: .15px; }
.card { display: flex; flex-direction: column; height: 612px; background: #fff; border-radius: 4px; box-shadow: 0 1px 2px rgba(0, 0, 0, .4); }
.card__title { margin: 0; height: 64px; padding-right: 481px; text-align: right; white-space: nowrap; direction: rtl; font-weight: 400; font-size: 24px; line-height: 65px; }
.stats { display: grid; grid-template-columns: 286px 286px 286px; grid-template-rows: 76px 76px; height: 168px; padding: 18px 15px 0; background: #edf7ed; }
.stat__l { display: flex; align-items: center; gap: 8px; height: 24px; line-height: 22px; letter-spacing: .15px; color: rgba(0, 0, 0, .6); white-space: nowrap; }
.stat__l span { margin-bottom: 2px; }
.stat__v { font-size: 20px; font-weight: 500; line-height: 32px; margin-top: 2px; letter-spacing: .15px; }
.ring { fill: none; stroke: currentColor; stroke-width: 1; }
.t20 { font: 11px Roboto, sans-serif; fill: currentColor; }
.sub { height: 48px; line-height: 47px; width: 285px; direction: rtl; white-space: nowrap; letter-spacing: .15px; color: rgba(0, 0, 0, .6); }
.row { display: grid; grid-template-columns: 216.5px repeat(6, 92.5px) 1fr; height: 33px; padding-left: 15px; align-items: center; font-size: 14px; letter-spacing: .15px; border-bottom: 1px solid #e0e0e0; }
.row--head { height: 58px; color: rgba(0, 0, 0, .6); }
.total { display: flex; align-items: center; font-weight: 500; color: rgba(0, 0, 0, .87); }
.sort { width: 18px; height: 18px; margin-left: 3px; color: rgba(0, 0, 0, .6); }
.pager { display: flex; align-items: center; justify-content: flex-end; margin-top: auto; height: 52px; padding-right: 10px; font-size: 14px; letter-spacing: .15px; }
.pager__n { margin-left: 24px; }
.pager__d { margin: 0 31px 0 1px; }
.pager__r { margin-right: 28px; }
.pager__p { margin-right: 16px; }

.backdrop { position: fixed; inset: 0; display: flex; justify-content: center; align-items: flex-start; padding-top: 53px; padding-right: 74px; background: rgba(0, 0, 0, .5); }
.dialog {
  width: 444px;
  height: 596px;
  padding: 16px 24px 0;
  background: #fff;
  border-radius: 16px;
  box-shadow: 0 11px 15px -7px rgba(0, 0, 0, .2), 0 24px 38px 3px rgba(0, 0, 0, .14), 0 9px 46px 8px rgba(0, 0, 0, .12);
}
.dialog__title { margin: 0 0 34px; font-size: 20px; font-weight: 500; line-height: 32px; letter-spacing: .17px; }
.field { position: relative; height: 87px; letter-spacing: .15px; }
.field__l { height: 20px; line-height: 20px; margin-bottom: 1px; color: rgba(0, 0, 0, .6); }
.select { display: flex; align-items: center; justify-content: space-between; height: 40px; padding: 0 6px 1px 13px; border: 1px solid #c4c4c4; border-radius: 4px; }
.select .ic24 { color: rgba(0, 0, 0, .54); }
.select__v { overflow: hidden; text-overflow: ellipsis; white-space: nowrap; max-width: 350px; }
.field--focus { height: 167px; }
.field--focus .field__l { color: #4bae4f; margin-bottom: 0; }
.field--focus .select { height: 41px; padding: 0 5px 0 12px; border: 2px solid #4bae4f; }
.menu { position: absolute; z-index: 2; top: 61px; left: -19px; width: 434px; padding: 8px 0; background: #fff; border-radius: 4px; box-shadow: 0 5px 5px -3px rgba(0, 0, 0, .2), 0 8px 10px 1px rgba(0, 0, 0, .14), 0 3px 14px 2px rgba(0, 0, 0, .12); }
.menu__i { height: 36px; line-height: 36px; padding-left: 16px; white-space: nowrap; }
.menu__i--on { background: #dbefdc; }
.actions { display: flex; justify-content: flex-end; margin: 10px -16px 0 0; }
.btn { height: 36px; line-height: 36px; padding: 0 16px; font-size: 14px; font-weight: 500; letter-spacing: .4px; }
.btn--go { background: #4bae4f; color: #fff; border-radius: 18px; box-shadow: 0 3px 1px -2px rgba(0, 0, 0, .2), 0 2px 2px rgba(0, 0, 0, .14), 0 1px 5px rgba(0, 0, 0, .12); }
```
